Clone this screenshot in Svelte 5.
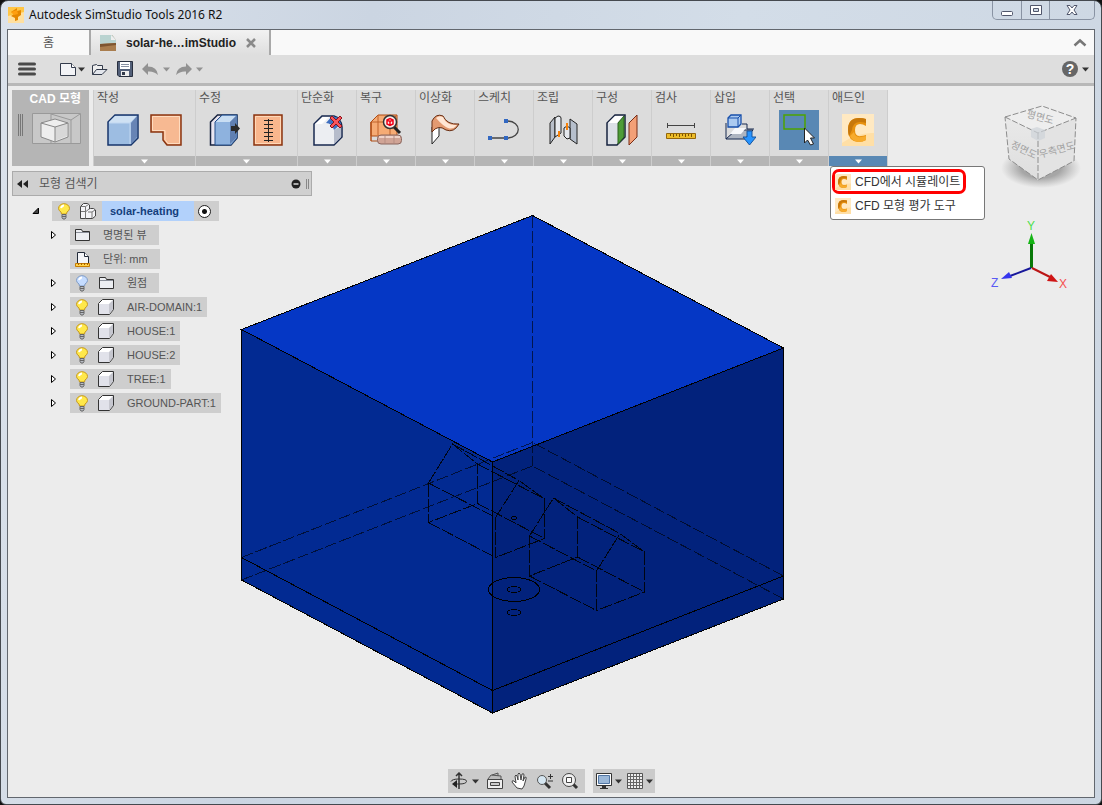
<script>
	let activeTab = $state('solar');
	let menuOpen = $state(true);

	const panels = [
		{ name: '작성', icons: ['box', 'sheet'] },
		{ name: '수정', icons: ['presspull', 'stitch'] },
		{ name: '단순화', icons: ['simplify'] },
		{ name: '복구', icons: ['repair'] },
		{ name: '이상화', icons: ['idealize'] },
		{ name: '스케치', icons: ['sketch'] },
		{ name: '조립', icons: ['assemble'] },
		{ name: '구성', icons: ['construct'] },
		{ name: '검사', icons: ['measure'] },
		{ name: '삽입', icons: ['insert'] },
		{ name: '선택', icons: ['select'] },
		{ name: '애드인', icons: ['cfd'], menu: ['CFD에서 시뮬레이트', 'CFD 모형 평가 도구'] }
	];

	const nodes = [
		{ label: '명명된 뷰', icon: 'folder', toggle: true },
		{ label: '단위: mm', icon: 'units' },
		{ label: '원점', icon: 'folder', toggle: true, bulb: 'off' },
		{ label: 'AIR-DOMAIN:1', icon: 'part', toggle: true, bulb: 'on' },
		{ label: 'HOUSE:1', icon: 'part', toggle: true, bulb: 'on' },
		{ label: 'HOUSE:2', icon: 'part', toggle: true, bulb: 'on' },
		{ label: 'TREE:1', icon: 'part', toggle: true, bulb: 'on' },
		{ label: 'GROUND-PART:1', icon: 'part', toggle: true, bulb: 'on' }
	];
</script>

{#snippet caret()}
	<svg class="caret" width="7" height="5" viewBox="0 0 7 5"><path d="M0 0.5h7L3.5 4.5z" fill="currentColor" /></svg>
{/snippet}

{#snippet cfd(size)}
	<svg width={size} height={size} viewBox="0 0 32 32">
		<rect width="32" height="32" fill="#ffdfa6" />
		<path d="M0 0h32v19Q16 18 0 29z" fill="#ffe9c2" />
		<path d="M24 5v7q-3-2-6-2-5 0-5 6 0 7 6 6 2 0 5-1v5q-3 2-8 2Q6 27 6 16 6 4 17 4q4 0 7 1z" fill="#e8920f" />
		<path d="M17 4q4 0 7 1v4q-3-1-6-1-7 0-8 8l-3 6q-1-3-1-6Q6 4 17 4z" fill="#c8780a" />
		<path d="M12 18q1 6 7 5l5-1v4q-3 2-8 2-6-1-8-6z" fill="#f7ab2c" />
	</svg>
{/snippet}

{#snippet bulb(on)}
	<svg width="14" height="17" viewBox="0 0 14 17">
		<path d="M4.5 11 4 9Q1.5 7.500 1.5 5.500A5.500 4.800 0 0 1 12.500 5.500Q12.500 7.500 10 9L9.500 11z" fill={on ? '#ffe84a' : '#c5dcff'} stroke={on ? '#c79a1e' : '#7f9cc7'} />
		<path d="M4 5q1-2.500 3-2.500" fill="none" stroke="#fff" stroke-width="2" />
		<path d="M5 11.500h4v3L8 16H6L5 14.500z" fill="#b8bcc4" stroke="#666" />
		<path d="M5 13.500h4" stroke="#666" />
	</svg>
{/snippet}

{#snippet treeIcon(name)}
	{#if name === 'folder'}
		<svg width="17" height="16" viewBox="0 0 17 16">
			<path d="M1.500 13.500v-11h6l1 2h7v9z" fill="#eceef2" stroke="#333" />
			<path d="M2 5.500h13" stroke="#8a8f99" />
		</svg>
	{:else if name === 'units'}
		<svg width="17" height="17" viewBox="0 0 17 17">
			<path d="M3.500 12V1.500h7l4 4V12" fill="#f4f5f8" stroke="#222b3a" />
			<path d="M10.500 1.500v4h4" fill="#fff" stroke="#222b3a" />
			<path d="M1.500 12.500h14v3h-14z" fill="#ffd24a" stroke="#c77d00" />
			<path d="M4.500 12v2m3-2v2m3-2v2m3-2v2" stroke="#a65f00" />
		</svg>
	{:else}
		<svg width="18" height="18" viewBox="0 0 18 18">
			<path d="M1.500 5.500 5.500 1.500h11v10l-4 5h-11z" fill="#fff" stroke="#333" />
			<path d="M2 6h10v10H2z" fill="#e1e2ea" />
			<path d="m12 6 4-4v9.500L12 16z" fill="#c6c7cf" />
		</svg>
	{/if}
{/snippet}

{#snippet icon(name)}
	<svg width="32" height="32" viewBox="0 0 32 32" fill="none">
		{#if name === 'box'}
			<path d="M1 8 8 1h23v23l-7 7H1z" fill="#9dbde2" stroke="#17356b" stroke-width="1.500" />
			<path d="m2 8 6-6h22l-7 7H2z" fill="#cfe1f3" />
			<path d="m24 9 6-7v21l-6 7z" fill="#6784b5" />
			<path d="M2 9h21v21" stroke="#c1d7f0" />
		{:else if name === 'sheet'}
			<path d="M1 1h30v30H17l-4-5v-8H1z" fill="#f7b992" stroke="#8a3510" stroke-width="1.500" />
			<path d="M2.500 2.500h27v27H18l-3-4v-9H2.500z" stroke="#ffdcc0" />
		{:else if name === 'presspull'}
			<path d="m1.500 8 7-7H28v23l-6 7H1.500z" fill="#e9e5f0" stroke="#17233f" stroke-width="1.500" />
			<path d="m6 8 7-7h15v23l-6 7H6z" fill="#8eb2de" stroke="#27508c" />
			<path d="m7 8 6-6h14l-6 6z" fill="#c9def3" />
			<path d="m21 8 6-6v22l-6 6z" fill="#6080b2" />
			<path d="M22 12h4V9l5 5.500-5 5.500v-3h-4z" fill="#2b2b2b" />
		{:else if name === 'stitch'}
			<path d="M2 1h28v30H2z" fill="#f9b68d" stroke="#8a3510" stroke-width="1.500" />
			<path d="M3.500 2.500h25v27h-25z" stroke="#ffd8b8" />
			<path d="M16.500 5v23M12 6.500h9m-9 4h9m-9 4h9m-9 4h9m-9 4h9m-9 4h9" stroke="#222" />
		{:else if name === 'simplify'}
			<path d="m3 10 8-8h12q7 2 8 11v10l-8 8H3z" fill="#eceef2" stroke="#17284f" stroke-width="1.500" />
			<path d="m4 10 8-7h6l-7 7z" fill="#fff" />
			<path d="M15 9q6 0 8 7l7-6-2-6-7-2z" fill="#3f6fc0" />
			<path d="M23 16v14l7-7V12z" fill="#b6bccb" />
			<path d="m19 4 2-2 4 4 4-4 2 2-4 4 4 4-2 2-4-4-4 4-2-2 4-4z" fill="#f8555d" stroke="#8f1219" />
		{:else if name === 'repair'}
			<path d="m1 8 7-7h19v21H1z" fill="#f6ab74" stroke="#ae4b12" />
			<path d="M1 8h19l7-7M8 1v20M20 8v14M1 27V8" stroke="#c0632a" />
			<path d="M1 8v19h20" stroke="#ae4b12" />
			<path d="m23 12 7 7" stroke="#222" stroke-width="3" />
			<circle cx="20" cy="8" r="6.500" fill="#f8ece8" stroke="#333" stroke-width="1.500" />
			<path d="m17 6 3-1.500L23 6v4l-3 1.500L17 10zm0 0 3 1.500L23 6m-3 1.500v4" stroke="#f00016" stroke-width="1.500" />
			<rect x="7.500" y="21" width="24" height="9" rx="3.500" fill="#d0a496" stroke="#8a665e" />
			<path d="M9 23h21" stroke="#efd2c8" stroke-width="2" />
			<path d="M15 22v7m9-7v7" stroke="#b58d82" />
		{:else if name === 'idealize'}
			<path d="M3 13v17l7-8V8z" fill="#fff" stroke="#222" />
			<path d="M3 18V7q4-8 11-5 4 9 16 8-5 9-13 6-8-6-14 2z" fill="#e39a71" stroke="#682d12" />
			<path d="M7 4q3-3 7-1 4 9 14 8-4 5-9 3-5-2-12-10z" fill="#ffe6d4" />
		{:else if name === 'sketch'}
			<path d="M2 24h17c15 0 15-17 0-17" stroke="#444" stroke-width="1.300" />
			<path d="M0 22h4v4H0zm16 0h4v4h-4zm0-17h4v4h-4z" fill="#3268c2" />
		{:else if name === 'assemble'}
			<path d="m3 9 5-6v20l-5 7z" fill="#b8bfca" stroke="#222" />
			<path d="m8 4 3-2q3 0 3 2v15l-6 4z" fill="#e7eaef" stroke="#222" />
			<path d="m23 5 7 5v20l-7-5z" fill="#b6bfcc" stroke="#222" />
			<path d="m17 14 3-2 3 2v10l-3 1-3-3z" fill="#e5e8ed" stroke="#222" />
			<path d="M12 17v6m8-14v7" stroke="#f98309" stroke-width="2" />
		{:else if name === 'construct'}
			<path d="m1 9 8-8h10v22l-8 8H1z" fill="#dce0e7" stroke="#17233f" stroke-width="1.500" />
			<path d="m2 9 7-7h8l-6 7z" fill="#fff" />
			<path d="m12 9 6-7v21l-6 7z" fill="#4d9c38" stroke="#2c601e" />
			<path d="m23 9 8-8v22l-8 8z" fill="#f3a077" stroke="#782d16" />
		{:else if name === 'measure'}
			<path d="M2.500 9v5m27-5v5M2 11.500h28" stroke="#444" />
			<path d="M1.500 19.500h29v5h-29z" fill="#edbd29" stroke="#93660b" />
			<path d="M5.500 20v2m3-2v3m3-3v2m3-2v3m3-3v2m3-2v3m3-3v2m3-2v3" stroke="#7d5300" />
		{:else if name === 'insert'}
			<path d="M2 9v16h19l8-9H12L2 25" fill="#aeb5c1" stroke="#17284f" />
			<path d="M6 20h11l5-6H11z" fill="#f7f8fb" />
			<path d="m4 4 3-3h10v9l-3 3H4z" fill="#abcaf0" stroke="#174fab" stroke-width="1.300" />
			<path d="M4 4h10v9M14 4l3-3" stroke="#174fab" />
			<path d="M18 10h5v5h7" stroke="#17284f" />
			<path d="M23 17h5v6h4l-6.500 8-6.500-8h4z" fill="#2794ff" stroke="#17559e" />
		{:else if name === 'select'}
			<path d="M1 1h21v14H1z" stroke="#4ea300" stroke-width="1.500" />
			<path d="M21.500 14v15l3-3 3 5 3-1-3-6h4z" fill="#fff" stroke="#222" />
		{/if}
	</svg>
{/snippet}

<div class="window">
	<header class="titlebar">
		<svg width="16" height="16" viewBox="0 0 16 16">
			<rect width="16" height="16" fill="#ffc545" />
			<path d="M0 16V9l16-4v11z" fill="#ffe0a0" />
			<path d="m3 5 6-4v3l4-1v5l-3 2v3l-3 1v-3L3 9l3-2z" fill="#e58700" />
			<path d="m3 5 6-2 1 4-4 1z" fill="#ff9f10" />
		</svg>
		<h1>Autodesk SimStudio Tools 2016 R2</h1>
		<div class="window-buttons">
			<button aria-label="최소화">
				<svg width="14" height="12" viewBox="0 0 14 12"><rect x="1.500" y="7.500" width="11" height="4" rx="1" fill="#fff" stroke="#50566b" /></svg>
			</button>
			<button aria-label="최대화">
				<svg width="14" height="12" viewBox="0 0 14 12"><path fill-rule="evenodd" d="M1.500 1.500h11v9h-11zM4.500 4.500h5v3h-5z" fill="#fff" stroke="#50566b" /></svg>
			</button>
			<button class="close" aria-label="닫기">
				<svg width="14" height="12" viewBox="0 0 14 12"><path d="M2 1.500h3l2 2.500 2-2.500h3L9 6l3 4.500H9L7 8l-2 2.500H2L5 6z" fill="#fff" stroke="#50566b" /></svg>
			</button>
		</div>
	</header>

	<div class="frame">
		<nav class="tabs">
			<button class="tab home" class:active={activeTab === 'home'} onclick={() => (activeTab = 'home')}>홈</button>
			<div class="tab document" class:active={activeTab === 'solar'}>
				<button class="tab-name" onclick={() => (activeTab = 'solar')}>
					<svg width="16" height="16" viewBox="0 0 16 16">
						<path d="M0 0h12l4 5v11H0z" fill="#a97d4e" />
						<path d="M0 0h12l4 5v3L0 9z" fill="#b9d3d0" />
						<path d="M11 0v5h5z" fill="#eee" />
						<path d="M0 9 16 8v2L0 12z" fill="#7e5530" />
					</svg>
					solar-he…imStudio
				</button>
				<button class="tab-close" aria-label="탭 닫기">
					<svg width="10" height="10" viewBox="0 0 10 10"><path d="m1 1 8 8M9 1 1 9" stroke="#8a8a8a" stroke-width="2.500" /></svg>
				</button>
			</div>
			<button class="collapse" aria-label="접기">
				<svg width="14" height="9" viewBox="0 0 14 9"><path d="m1.500 7.500 5.500-5 5.500 5" fill="none" stroke="#777" stroke-width="2.500" /></svg>
			</button>
		</nav>

		<div class="toolbar">
			<button class="app-menu" aria-label="메뉴">
				<svg width="18" height="14" viewBox="0 0 18 14"><path d="M1.500 2h15m-15 5h15m-15 5h15" stroke="#4a4a4a" stroke-width="3" stroke-linecap="round" /></svg>
			</button>
			<button class="new" aria-label="새로 만들기">
				<svg width="17" height="15" viewBox="0 0 17 15"><path d="M.5 1.500h11l4 4v8H.5z" fill="#f2f3f6" stroke="#333b4b" /><path d="M11.500 1.500v4h4" fill="#fff" stroke="#333b4b" /></svg>
				{@render caret()}
			</button>
			<button aria-label="열기">
				<svg width="17" height="15" viewBox="0 0 17 15"><path d="M1.500 12.500v-9l4-1 1 1h5v4" fill="#eee" stroke="#333b4b" /><path d="m1.500 12.500 4-5h10.500l-5 5z" fill="#e3e6ec" stroke="#333b4b" /></svg>
			</button>
			<button aria-label="저장">
				<svg width="16" height="16" viewBox="0 0 16 16"><path d="M.5.5h15v15H2L.5 14z" fill="#536079" stroke="#29303f" /><path d="M3 1h10v7H3z" fill="#fff" /><path d="M4 3.500h8m-8 2h8" stroke="#8790a1" /><path d="M4 10h8v5H4z" fill="#eee" /><path d="M5 11h3v3H5z" fill="#333b4b" /></svg>
			</button>
			<button class="muted" aria-label="실행 취소">
				<svg width="17" height="13" viewBox="0 0 17 13"><path d="M6 0v3.500q9 0 10 8.500-4-4-10-3.500V12L0 6z" fill="currentColor" /></svg>
				{@render caret()}
			</button>
			<button class="muted redo" aria-label="다시 실행">
				<svg width="17" height="13" viewBox="0 0 17 13"><path d="M11 0v3.500Q2 3.500 1 12q4-4 10-3.500V12l6-6z" fill="currentColor" /></svg>
				{@render caret()}
			</button>
			<button class="help" aria-label="도움말">
				<span class="help-mark">?</span>
				{@render caret()}
			</button>
		</div>

		<main>
			<div class="ribbon">
				<button class="workspace">
					<span>CAD 모형</span>
					<svg width="76" height="34" viewBox="0 0 76 34" fill="none">
						<path d="M5.500 2v22m2-22v22m2-22v22" stroke="#777" />
						<path d="M19.500 1.500h48v30h-48z" fill="#c8c8c8" stroke="#999" />
						<path d="M38 2v29m0-29 20 6 9-6M58 8v23" stroke="#999" />
						<path d="m28 11 14-4 13 4v14l-13 5-14-5z" fill="#eee" stroke="#888" />
						<path d="m42 15 12-4v13l-12 5z" fill="#d8d8d8" />
						<path d="m28 11 14 4 13-4M42 15v15" stroke="#888" />
					</svg>
				</button>
				<div class="panels">
					{#each panels as panel}
						<section class="panel" class:wide={panel.icons.length > 1}>
							<h2>{panel.name}</h2>
							<div class="tools">
								{#each panel.icons as name}
									<button class="tool" class:selected={name === 'select'} aria-label={panel.name}>
										{#if name === 'cfd'}
											{@render cfd(32)}
										{:else}
											{@render icon(name)}
										{/if}
									</button>
								{/each}
							</div>
							<button
								class="more"
								class:open={panel.menu && menuOpen}
								aria-label="{panel.name} 메뉴"
								onclick={() => { if (panel.menu) menuOpen = !menuOpen; }}
							>
								{@render caret()}
							</button>
							{#if panel.menu && menuOpen}
								<div class="menu">
									{#each panel.menu as item, i}
										<button class:highlight={i === 0}>
											{@render cfd(16)}
											{item}
										</button>
									{/each}
								</div>
							{/if}
						</section>
					{/each}
				</div>
			</div>

			<div class="browser-head">
				<button aria-label="접기">
					<svg width="11" height="8" viewBox="0 0 11 8"><path d="M5 0v8L0 4zm6 0v8L6 4z" fill="#222" /></svg>
				</button>
				<h2>모형 검색기</h2>
				<button class="minus" aria-label="숨기기">
					<svg width="19" height="10" viewBox="0 0 19 10"><circle cx="5" cy="5" r="4.500" fill="#222" /><path d="M2.500 5h5" stroke="#ddd" stroke-width="1.500" /><path d="M15.500 0v10m2-10v10" stroke="#888" /></svg>
				</button>
			</div>

			<div class="content">
				<ul class="tree">
					<li class="root">
						<button class="toggle" aria-label="접기">
							<svg width="8" height="8" viewBox="0 0 8 8"><path d="M6.500 1v5.500H1z" fill="#444" stroke="#000" /></svg>
						</button>
						<div class="node">
							<span class="cell">{@render bulb(true)}</span>
							<span class="cell">
								<svg width="18" height="18" viewBox="0 0 18 18"><path d="m1.500 4.500 3-3h4l2 1.500v4l1-.5h3l2 1.500v6l-3 2.500h-12z" fill="#f4f4f7" stroke="#444" /><path d="M1.500 4.500h5l3-2m-3 2v12M2 9.500h5l3-2.500m-1 3h4l3-2m-3 2v6" fill="none" stroke="#777" /></svg>
							</span>
							<strong>solar-heating</strong>
							<label class="active-node"><input type="radio" name="active" checked aria-label="solar-heating" /></label>
						</div>
					</li>
					{#each nodes as node}
						<li>
							{#if node.toggle}
								<button class="toggle" aria-label="펼치기">
									<svg width="7" height="10" viewBox="0 0 7 10"><path d="M1.500 1.500v7l4-3.500z" fill="#fff" stroke="#000" /></svg>
								</button>
							{:else}
								<span class="toggle"></span>
							{/if}
							<div class="node">
								{#if node.bulb}
									<span class="cell">{@render bulb(node.bulb === 'on')}</span>
								{/if}
								<span class="cell">{@render treeIcon(node.icon)}</span>
								<span class="label" class:category={node.icon !== 'part'}>{node.label}</span>
							</div>
						</li>
					{/each}
				</ul>

				<svg class="scene" width="545" height="501" viewBox="240 214 545 501" fill="none" stroke="#000" shape-rendering="crispEdges">
					<path d="m241.500 329.500 291-114 251 132.500-291 114z" fill="#0537c5" />
					<path d="m241.500 329.500 251 132.500v251l-251-133z" fill="#022a92" />
					<path d="M492.500 462 783.500 348v251l-291 114z" fill="#02227c" />
					<path d="m241.500 557.500 251 133 291-114.500" />
					<!-- hidden edges of the air volume -->
					<g stroke-dasharray="12 3" stroke-opacity="0.600">
						<path d="M532.500 216v250" />
						<path d="m241.500 557.500 291-115 251 133.500" />
						<path d="m241.500 580 291-114 251 133" />
					</g>
					<!-- houses -->
					<g stroke-dasharray="13 2" stroke-opacity="0.850">
						<path d="m428.500 483 24-39 25 20v39.500l-49 19z" />
						<path d="m495.500 517.500 23.500-37 25.500 18.500v39.500l-49 19z" />
						<path d="m428.500 483 67 34.500M452.500 444l66.500 36.500M477.500 464l67 35M428.500 522.500l67 35M477.500 503.500l67 35" />
						<path d="m529.500 536 24-38 24 19v40l-48 19z" />
						<path d="m596.500 571 23.500-37.500 24.500 18.500v40l-48 18.500z" />
						<path d="m529.500 536 67 35M553.500 498l66.500 35.500M577.500 517l67 35M529.500 576l67 34.500M577.500 557l67 35" />
					</g>
					<!-- tree -->
					<ellipse cx="514" cy="589.500" rx="25.500" ry="12" />
					<ellipse cx="514" cy="589.500" rx="6.500" ry="3" />
					<ellipse cx="514" cy="612.500" rx="6.500" ry="3" />
					<ellipse cx="514" cy="518" rx="2.500" ry="1.300" />
				</svg>
			</div>

			<svg class="orientation" width="105" height="200" viewBox="985 95 105 200">
				<defs>
					<radialGradient id="shade"><stop offset="0.500" stop-color="#888" stop-opacity="0.700" /><stop offset="1" stop-color="#999" stop-opacity="0" /></radialGradient>
					<linearGradient id="face" x2="0" y2="1"><stop stop-color="#e9e9e9" /><stop offset="1" stop-color="#dedede" /></linearGradient>
				</defs>
				<ellipse cx="1041" cy="168" rx="40" ry="20" fill="url(#shade)" />
				<path d="m1005 117 37-11 34 12-38 15z" fill="#eee" />
				<path d="m1005 117 33 16v47l-29-21z" fill="url(#face)" />
				<path d="m1038 133 38-15-2 43-36 19z" fill="#e3e3e3" />
				<path d="m1005 117 37-11 34 12-2 43-36 19-29-21zm0 0 33 16 38-15m-38 15v47" fill="none" stroke="#8d8d8d" stroke-dasharray="6 2" />
				<path d="m1031 129 6-2 8 3v8l-7 3-7-4z" fill="#cdd3d8" opacity="0.700" />
				<g class="face-names">
					<text transform="translate(1026 117) rotate(15)">평면도</text>
					<text transform="translate(1010 147) rotate(26)">정면도</text>
					<text transform="translate(1040 158) rotate(-15)">우측면도</text>
				</g>
				<path d="M1031.500 268v-27" stroke="#087808" stroke-width="3" />
				<path d="m1028 244 3.500-11 3.500 11z" fill="#14b414" />
				<path d="m1031 268-21 8" stroke="#18189a" stroke-width="2" />
				<path d="m1001 279 8-7 3 6z" fill="#3535ee" />
				<path d="m1032 268 18 9" stroke="#bb1616" stroke-width="2" />
				<path d="m1058 282-11-1 4-7z" fill="#cf1515" />
				<g class="axis-names">
					<text x="1027" y="230" fill="#4be04b">Y</text>
					<text x="991" y="287" fill="#5a5af5">Z</text>
					<text x="1059" y="288" fill="#f55050">X</text>
				</g>
			</svg>

			<div class="viewbar">
				<div class="group">
					<button aria-label="궤도">
						<svg width="18" height="18" viewBox="0 0 18 18" fill="none"><path d="M9 17V2M6 4l3-3 3 3" stroke="#333" stroke-width="1.500" /><path d="M9 7q8 0 7.500 2.500T9 12H3m6-5Q2 7 1 9.500" stroke="#333" /><path d="m7 8-5 4 5 4z" fill="#222" /></svg>
						{@render caret()}
					</button>
					<button aria-label="보기">
						<svg width="18" height="18" viewBox="0 0 18 18"><path d="M1.500 7.500h15v9h-15z" fill="#eee" stroke="#444" /><path d="M4.500 10.500h9v3h-9z" fill="#ccc" stroke="#444" /><path d="m2 7 3-4 10 1v3M6 3l6-2v3" fill="#bbb" stroke="#555" /></svg>
					</button>
					<button aria-label="초점이동">
						<svg width="18" height="18" viewBox="0 0 18 18"><path d="m6 16-5-6q0-2 2-1l2 2-1-7q1-2 2 0l1 4V2q1-2 2 0l1 6 1-6q2-1 2 1l-1 6 2-4q2 0 1 2l-2 7-2 3z" fill="#fff" stroke="#444" /></svg>
					</button>
					<button aria-label="줌">
						<svg width="18" height="18" viewBox="0 0 18 18"><path d="m9 11 5 5" stroke="#333" stroke-width="3" /><circle cx="6" cy="8" r="4.500" fill="#d5e6f1" stroke="#555" /><path d="M12 4.500h5M14.500 2v5M12 9h5" stroke="#333" /></svg>
					</button>
					<button aria-label="창 맞춤">
						<svg width="18" height="18" viewBox="0 0 18 18"><path d="m11 11 5 5" stroke="#333" stroke-width="3" /><circle cx="8" cy="8" r="6.500" fill="#f0f0f0" stroke="#444" /><path d="M5.500 5.500h5v5h-5z" fill="#fff" stroke="#444" /></svg>
					</button>
				</div>
				<div class="group">
					<button aria-label="화면 표시">
						<svg width="18" height="18" viewBox="0 0 18 18"><path d="M1.500 1.500h15v12h-15z" fill="#fff" stroke="#333" /><path d="M3.500 3.500h11v8h-11z" fill="#9bb8d9" stroke="#5276a3" /><path d="M7 14h4v2h2v1H5v-1h2z" fill="#333" /></svg>
						{@render caret()}
					</button>
					<button aria-label="그리드">
						<svg width="18" height="18" viewBox="0 0 18 18"><path d="M1.500 1.500h15v15h-15z" fill="#eee" stroke="#555" /><path d="M4.500 2v14m3-14v14m3-14v14m3-14v14M2 4.500h14m-14 3h14m-14 3h14m-14 3h14" stroke="#666" /></svg>
						{@render caret()}
					</button>
				</div>
			</div>
		</main>
	</div>
</div>

<style>
	:global(body) {
		margin: 0;
		background: #111;
	}
	* {
		box-sizing: border-box;
	}
	.window {
		display: flex;
		flex-direction: column;
		min-height: 100vh;
		padding: 0 6px 6px;
		border: 1px solid #45494f;
		border-radius: 8px 8px 6px 6px;
		background: linear-gradient(100deg, #dbe2eb, #cbd5e2 30%, #d3dde8 60%, #ccd6e2);
		font: 12px/16px "Liberation Sans", "Noto Sans CJK KR", sans-serif;
		color: #555;
	}
	h1, h2 {
		margin: 0;
		font-size: 12px;
		font-weight: 400;
	}
	svg {
		display: block;
		flex: none;
	}
	button {
		display: flex;
		align-items: center;
		padding: 0;
		border: 0;
		background: none;
		font: inherit;
		color: inherit;
	}

	.titlebar {
		display: flex;
		align-items: center;
		gap: 5px;
		height: 28px;
		padding-left: 1px;
	}
	.titlebar h1 {
		font-family: "Noto Sans", sans-serif;
		color: #111;
	}
	.window-buttons {
		display: flex;
		align-self: flex-start;
		height: 19px;
		margin-left: auto;
		border: 1px solid #8993a3;
		border-top: 0;
		border-radius: 0 0 5px 5px;
	}
	.window-buttons button {
		justify-content: center;
		width: 28px;
	}
	.window-buttons button + button {
		border-left: 1px solid #8993a3;
	}
	.window-buttons .close {
		width: 45px;
	}

	.frame {
		display: flex;
		flex: 1;
		flex-direction: column;
		border: 1px solid #62676e;
		background: #ececec;
	}
	.tabs {
		display: flex;
		height: 25px;
		background: #f9f9f9;
	}
	.tab {
		display: flex;
		align-items: center;
		border-right: 2px solid #a9a9a9;
	}
	.tab.home {
		justify-content: center;
		width: 83px;
	}
	.tab.active {
		background: linear-gradient(#f2f2f2, #dedede);
	}
	.document {
		gap: 10px;
		padding: 0 13px 0 9px;
	}
	.tab-name {
		gap: 10px;
		font-weight: 700;
		color: #222;
	}
	.collapse {
		margin: 0 7px 0 auto;
	}

	.toolbar {
		display: flex;
		align-items: center;
		gap: 9px;
		height: 31px;
		padding: 0 5px 0 10px;
		border-bottom: 3px solid #b8b8b8;
		background: #dedede;
		color: #333;
	}
	.toolbar button {
		gap: 4px;
	}
	.toolbar .app-menu {
		margin-right: 15px;
	}
	.toolbar .new {
		gap: 1px;
		margin-right: -3px;
	}
	.toolbar .muted {
		color: #929292;
	}
	.toolbar .redo {
		margin-left: -4px;
	}
	.toolbar .help {
		margin-left: auto;
	}
	.help-mark {
		width: 16px;
		height: 16px;
		border-radius: 8px;
		background: #666;
		font-weight: 700;
		font-size: 14px;
		text-align: center;
		color: #fff;
	}

	main {
		position: relative;
		display: flex;
		flex: 1;
		flex-direction: column;
		padding: 4px;
	}
	.ribbon {
		display: flex;
		gap: 4px;
		height: 76px;
	}
	.workspace {
		flex-direction: column;
		gap: 5px;
		width: 77px;
		padding-top: 1px;
		background: #b5b5b5;
		font-weight: 700;
		color: #fff;
	}
	.workspace span {
		align-self: flex-end;
		padding-right: 8px;
	}
	.panels {
		display: flex;
		border-left: 1px solid #cdcdcd;
	}
	.panel {
		position: relative;
		display: flex;
		flex-direction: column;
		width: 59px;
		border-right: 1px solid #cdcdcd;
		background: #dcdcdc;
	}
	.panel.wide {
		width: 102px;
	}
	.panel h2 {
		height: 14px;
		padding-left: 3px;
		line-height: 16px;
	}
	.tools {
		display: flex;
		flex: 1;
		align-items: center;
		justify-content: center;
		gap: 11px;
	}
	.tool.selected {
		padding: 4px;
		background: #5988b4;
	}
	.more {
		justify-content: center;
		height: 10px;
		background: #b5b5b5;
		color: #fff;
	}
	.more.open {
		background: #5988b4;
	}
	.menu {
		position: absolute;
		top: 76px;
		left: 1px;
		z-index: 1;
		width: 155px;
		padding: 2px 1px 1px;
		border: 1px solid #777;
		border-radius: 3px;
		background: #fff;
		color: #333;
	}
	.menu button {
		gap: 4px;
		height: 24px;
		padding-right: 3px;
		border: 3px solid transparent;
		border-radius: 7px;
		white-space: nowrap;
	}
	.menu .highlight {
		height: 25px;
		border-color: #f00;
	}

	.browser-head {
		display: flex;
		align-items: center;
		width: 300px;
		height: 25px;
		margin-top: 5px;
		padding: 0 1px 0 4px;
		border: 1px solid #ababab;
		background: #d0d0d0;
	}
	.browser-head h2 {
		padding-left: 11px;
	}
	.minus {
		margin-left: auto;
	}

	.content {
		display: flex;
		align-items: flex-start;
	}
	.tree {
		width: 228px;
		margin: 5px 0 0;
		padding: 0;
		font-size: 11px;
		list-style: none;
	}
	.tree li {
		display: flex;
		height: 20px;
		margin-bottom: 4px;
		padding-left: 38px;
	}
	.tree .root {
		padding-left: 20px;
	}
	.toggle {
		flex: none;
		width: 20px;
	}
	.node {
		display: flex;
		align-items: center;
		background: #cecece;
	}
	.cell {
		display: flex;
		flex: none;
		justify-content: center;
		width: 24px;
	}
	.label {
		padding: 0 5px 0 9px;
		white-space: nowrap;
	}
	.label.category {
		padding-right: 12px;
	}
	.node strong {
		margin-left: 2px;
		padding: 0 15px 0 8px;
		background: #b2d1fb;
		line-height: 20px;
		color: #143e7c;
	}
	.active-node {
		display: flex;
		padding: 0 8px 0 4px;
	}
	.active-node input {
		width: 13px;
		height: 13px;
		margin: 0;
		border: 1px solid #222;
		border-radius: 50%;
		background: radial-gradient(#111 0 2px, #fff 3px);
		appearance: none;
	}
	.scene {
		margin-top: 18px;
	}

	.orientation {
		position: absolute;
		top: 9px;
		right: 4px;
	}
	.face-names {
		font-size: 10px;
		fill: #a2a2a2;
	}
	.axis-names {
		font-size: 12px;
	}

	.viewbar {
		display: flex;
		justify-content: center;
		gap: 8px;
		margin-top: auto;
	}
	.group {
		display: flex;
		align-items: center;
		gap: 7px;
		height: 24px;
		padding: 0 6px 0 2px;
		background: #cbcbcb;
		color: #333;
	}
	.group button {
		gap: 4px;
	}
	.group:last-child {
		gap: 4px;
		padding: 0 2px;
	}
	.group:last-child button {
		gap: 2px;
	}
</style>
